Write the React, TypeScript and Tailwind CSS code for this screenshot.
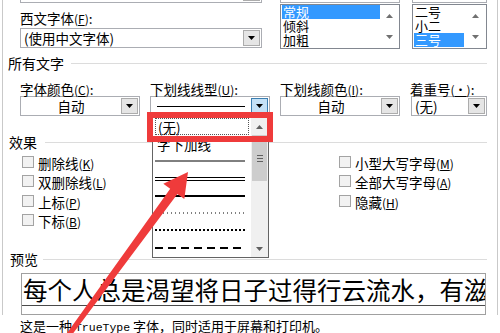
import React from "react";

function Tri({ up = false, color = "#000", w = 7, h = 4 }: { up?: boolean; color?: string; w?: number; h?: number }) {
  return (
    <svg width={w} height={h} viewBox={`0 0 ${w} ${h}`}>
      <path d={up ? `M0 ${h}L${w / 2} 0L${w} ${h}Z` : `M0 0L${w} 0L${w / 2} ${h}Z`} fill={color} />
    </svg>
  );
}

function Lbl({ t, k, colon = true }: { t: string; k: string; colon?: boolean }) {
  return (
    <span className="whitespace-nowrap text-[13.5px] leading-[14px]">
      {t}
      <span className="text-[12px]">
        (<span className="underline underline-offset-1">{k}</span>)
      </span>
      {colon && ":"}
    </span>
  );
}

function DropBtn({ active = false }: { active?: boolean }) {
  return (
    <div
      className={`my-[1px] mr-[1px] flex w-[17px] items-center justify-center border ${
        active ? "border-[#3c7fb1] bg-[#c4e1f6]" : "border-[#acacac] bg-[#e5e5e5]"
      }`}
    >
      <Tri />
    </div>
  );
}

function Combo({
  children,
  center = false,
  active = false,
}: {
  children?: React.ReactNode;
  center?: boolean;
  active?: boolean;
}) {
  return (
    <div className="flex h-[20px] border border-[#abadb3] bg-white">
      <div
        className={`flex min-w-0 flex-1 items-center overflow-hidden text-[13.5px] leading-[14px] ${
          center ? "justify-center" : "pl-[3px]"
        }`}
      >
        {children}
      </div>
      <DropBtn active={active} />
    </div>
  );
}

function ListBox({ items, sel, className, sb }: { items: string[]; sel: number; className: string; sb: string }) {
  return (
    <div className={`flex flex-col ${className}`}>
      <div className="h-[21px] border border-[#abadb3]" />
      <div className="mt-[1px] flex h-[45px] border border-[#828790] bg-white">
        <div className="flex-1 pl-[1px]">
          {items.map((it, i) => (
            <div
              key={it}
              className={`h-[14px] pl-[1px] text-[13px] leading-[14px] ${i === sel ? "bg-[#3399ff] text-white" : ""}`}
            >
              {it}
            </div>
          ))}
        </div>
        <div className={`flex ${sb} flex-col items-center justify-around`}>
          <Tri up color="#707070" />
          <Tri color="#707070" />
        </div>
      </div>
    </div>
  );
}

function Group({ t, className, gap }: { t: string; className: string; gap: string }) {
  return (
    <div className={`flex h-[14px] items-center ${className}`}>
      <span className="whitespace-nowrap text-[14px] leading-[14px]">{t}</span>
      <div className={`h-px flex-1 bg-[#dcdcdc] ${gap}`} />
    </div>
  );
}

function Check({ t, k }: { t: string; k: string }) {
  return (
    <div className="flex h-[19.5px] items-center">
      <div className="h-[12px] w-[12px] border border-[#a3a3a3] bg-[#f2f2f2]" />
      <span className="ml-[4px]">
        <Lbl t={t} k={k} colon={false} />
      </span>
    </div>
  );
}

function Sample({ w, dash, two = false }: { w: number; dash?: string; two?: boolean }) {
  return (
    <div className="flex h-[17.3px] items-center pl-[2px]">
      <svg width="90" height="6" viewBox="0 0 90 6">
        {two ? (
          <>
            <line x1="0" y1="1.5" x2="90" y2="1.5" stroke="#000" strokeWidth="1" />
            <line x1="0" y1="4.5" x2="90" y2="4.5" stroke="#000" strokeWidth="1" />
          </>
        ) : (
          <line x1="0" y1="3" x2="90" y2="3" stroke="#000" strokeWidth={w} strokeDasharray={dash} />
        )}
      </svg>
    </div>
  );
}

export default function App() {
  return (
    <div className="relative h-[333px] w-[500px] overflow-hidden bg-white font-['Noto_Sans_CJK_SC',sans-serif] text-black">
      <div className="mx-[2px] h-full border-x border-[#c9c9c9]">
        {/* font name row ------------------------------------------------ */}
        <div className="-mt-[18px] flex">
          <div className="ml-[17px] flex w-[242px] flex-col">
            <div className="flex h-[21px] border border-[#abadb3]">
              <div className="flex-1" />
              <DropBtn />
            </div>
            <div className="h-[25px] pt-[4px] leading-[20px]">
              <Lbl t="西文字体" k="F" />
            </div>
            <Combo>(使用中文字体)</Combo>
          </div>
          <ListBox items={["常规", "倾斜", "加粗"]} sel={0} className="ml-[18px] w-[120px]" sb="w-[19px]" />
          <ListBox items={["二号", "小二", "三号"]} sel={2} className="ml-[12px] w-[75px]" sb="w-[22px]" />
        </div>

        {/* all text ----------------------------------------------------- */}
        <Group t="所有文字" className="ml-[5px] mt-[7px] w-[479px]" gap="ml-[7px]" />
        <div className="ml-[17px] mt-[6px] flex gap-[10px]">
          <div className="w-[120px]">
            <div className="h-[14px]">
              <Lbl t="字体颜色" k="C" />
            </div>
            <div className="mt-[6px]">
              <Combo center>自动</Combo>
            </div>
          </div>
          <div className="w-[120px]">
            <div className="h-[14px]">
              <Lbl t="下划线线型" k="U" />
            </div>
            <div className="mt-[6px]">
              <Combo active>
                <div className="ml-[3px] h-px w-[88px] bg-black" />
              </Combo>
            </div>
          </div>
          <div className="w-[120px]">
            <div className="h-[14px]">
              <Lbl t="下划线颜色" k="I" />
            </div>
            <div className="mt-[6px]">
              <Combo center>自动</Combo>
            </div>
          </div>
          <div className="w-[77px]">
            <div className="h-[14px]">
              <Lbl t="着重号" k="·" />
            </div>
            <div className="ml-[1px] mt-[6px]">
              <Combo>(无)</Combo>
            </div>
          </div>
        </div>

        {/* effects ------------------------------------------------------ */}
        <Group t="效果" className="ml-[6px] mt-[19px] w-[478px]" gap="ml-[8px]" />
        <div className="mt-[3px] flex">
          <div className="ml-[19px] w-[317px]">
            <Check t="删除线" k="K" />
            <Check t="双删除线" k="L" />
            <Check t="上标" k="P" />
            <Check t="下标" k="B" />
          </div>
          <div>
            <Check t="小型大写字母" k="M" />
            <Check t="全部大写字母" k="A" />
            <Check t="隐藏" k="H" />
          </div>
        </div>

        {/* preview ------------------------------------------------------ */}
        <Group t="预览" className="ml-[7px] mt-[22px] w-[477px]" gap="ml-[5px]" />
        <div className="ml-[18px] mt-[7px] h-[42px] w-[465px] overflow-hidden border border-[#a0a0a0]">
          <div className="h-[32px] overflow-hidden whitespace-nowrap border-b border-[#4a4a4a] pl-[1px] pt-[2px] text-[24.5px] leading-[28px]">
            每个人总是渴望将日子过得行云流水，有滋有味
          </div>
        </div>
        <div className="ml-[17px] mt-[4px] whitespace-nowrap text-[13px] leading-[14px]">
          这是一种 <span className="font-['Liberation_Mono',monospace] text-[11.5px]">TrueType</span> 字体，同时适用于屏幕和打印机。
        </div>
      </div>

      {/* open underline-style list ------------------------------------- */}
      <div className="absolute left-[152px] top-[117px] flex h-[141px] w-[117px] border border-[#646464] bg-white">
        <div className="flex flex-1 flex-col">
          <div className="mx-[2px] flex h-[17.3px] items-center border border-dotted border-[#555] pl-[2px] text-[13.5px] leading-[14px]">
            (无)
          </div>
          <div className="flex h-[17.3px] items-center pl-[4px] text-[13.5px] leading-[14px]">字下加线</div>
          <Sample w={1} />
          <Sample w={1} two />
          <Sample w={2} />
          <Sample w={1} dash="1 3" />
          <Sample w={2} dash="2 2" />
          <Sample w={2} dash="8 5" />
        </div>
        <div className="flex w-[17px] flex-col bg-[#f0f0f0]">
          <div className="flex h-[17px] items-center justify-center">
            <Tri up color="#606060" />
          </div>
          <div className="mx-[1px] flex h-[46px] items-center justify-center bg-[#cdcdcd]">
            <div className="flex flex-col gap-[2px]">
              <div className="h-px w-[6px] bg-[#606060]" />
              <div className="h-px w-[6px] bg-[#606060]" />
              <div className="h-px w-[6px] bg-[#606060]" />
            </div>
          </div>
          <div className="flex-1" />
          <div className="flex h-[17px] items-center justify-center">
            <Tri color="#606060" />
          </div>
        </div>
      </div>

      {/* annotation ---------------------------------------------------- */}
      <div className="absolute left-[147px] top-[112px] h-[30px] w-[126px] border-[6px] border-[#ef3b3b]" />
      <svg className="pointer-events-none absolute inset-0" width="500" height="333" viewBox="0 0 500 333">
        <polygon
          points="188,172 184.3,199.1 177.4,194.1 70,337.5 66,334.5 170.2,188.7 163.3,183.7"
          fill="#ef3b3b"
        />
      </svg>
    </div>
  );
}
